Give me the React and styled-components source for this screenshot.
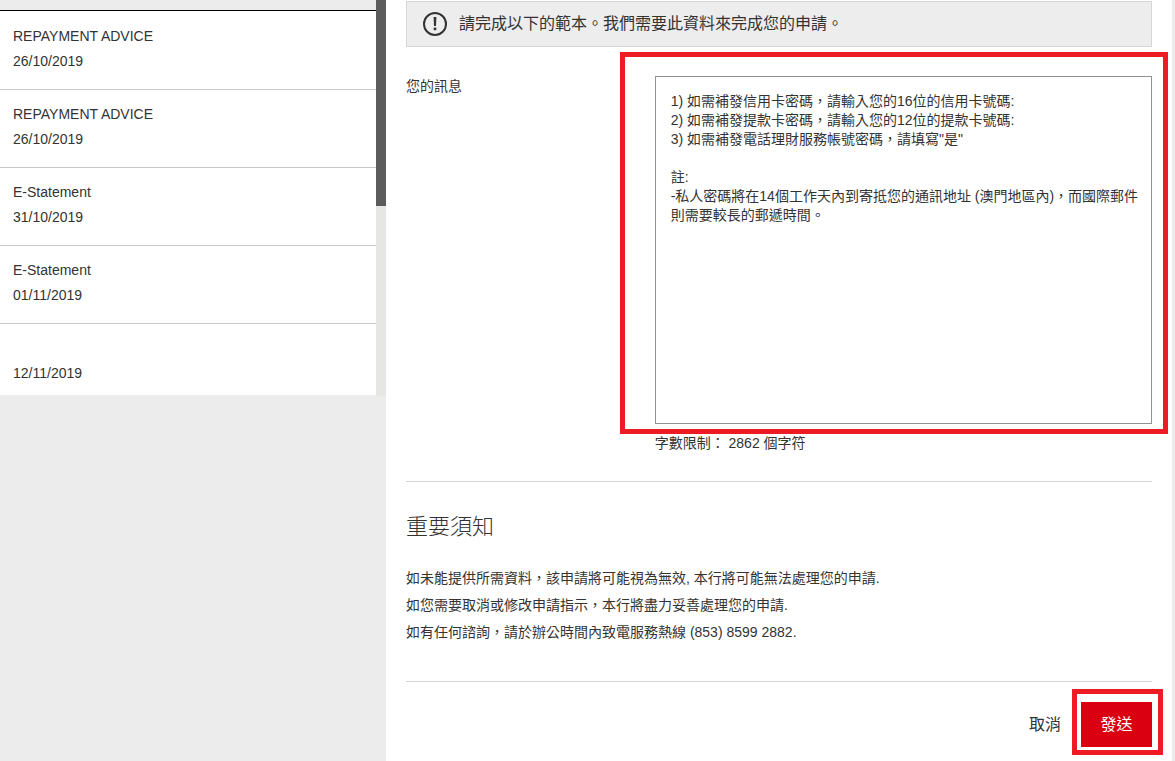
import React, { useState } from "react";
import styled, { createGlobalStyle } from "styled-components";

const messages = [
  { id: 1, title: "REPAYMENT ADVICE", date: "26/10/2019" },
  { id: 2, title: "REPAYMENT ADVICE", date: "26/10/2019" },
  { id: 3, title: "E-Statement", date: "31/10/2019" },
  { id: 4, title: "E-Statement", date: "01/11/2019" },
  { id: 5, title: "", date: "12/11/2019" },
];

const template = `1) 如需補發信用卡密碼，請輸入您的16位的信用卡號碼:
2) 如需補發提款卡密碼，請輸入您的12位的提款卡號碼:
3) 如需補發電話理財服務帳號密碼，請填寫"是"

註:
-私人密碼將在14個工作天內到寄抵您的通訊地址 (澳門地區內)，而國際郵件則需要較長的郵遞時間。`;

const App = () => {
  const [text, setText] = useState(template);

  // the limit shown is what is left after the template
  const remaining = 2862 - (text.length - template.length);

  return (
    <Page lang="zh-Hant">
      <GlobalStyle />
      <Sidebar>
        <MessageList>
          {messages.map((message) => (
            <Message key={message.id}>
              <MessageLine>{message.title}</MessageLine>
              <MessageLine>{message.date}</MessageLine>
            </Message>
          ))}
        </MessageList>
        <ScrollTrack>
          <ScrollThumb />
        </ScrollTrack>
      </Sidebar>

      <Main>
        <Notice>
          <AlertIcon />
          <span>請完成以下的範本。我們需要此資料來完成您的申請。</span>
        </Notice>

        <Field>
          <Label htmlFor="message">您的訊息</Label>
          <div>
            <Framed>
              <TextArea
                id="message"
                spellCheck={false}
                value={text}
                onChange={(e) => setText(e.target.value)}
              />
              <Frame $top={24} $right={16} $bottom={10} $left={35} />
            </Framed>
            <Count>字數限制： {remaining} 個字符</Count>
          </div>
        </Field>

        <Notes>
          <Heading>重要須知</Heading>
          <Note>如未能提供所需資料，該申請將可能視為無效, 本行將可能無法處理您的申請.</Note>
          <Note>如您需要取消或修改申請指示，本行將盡力妥善處理您的申請.</Note>
          <Note>如有任何諮詢，請於辦公時間內致電服務熱線 (853) 8599 2882.</Note>
        </Notes>

        <Actions>
          <CancelButton type="button">取消</CancelButton>
          <Framed>
            <SendButton type="button">發送</SendButton>
            <Frame $top={13} $right={11} $bottom={8} $left={9} />
          </Framed>
        </Actions>
      </Main>
    </Page>
  );
};

const AlertIcon = () => (
  <svg width="24" height="24" viewBox="0 0 24 24" aria-hidden="true">
    <circle cx="12" cy="12" r="11" fill="none" stroke="#333" strokeWidth="2" />
    <path d="M10.6 5h2.8l-.4 9h-2z" fill="#333" />
    <rect x="10.7" y="15.6" width="2.6" height="2.6" fill="#333" />
  </svg>
);

const GlobalStyle = createGlobalStyle`
  * {
    box-sizing: border-box;
  }

  body {
    margin: 0;
    background: #ececec;
    color: #333;
    font-family: "Liberation Sans", "Noto Sans CJK TC", sans-serif;
    font-size: 14px;
  }

  button,
  textarea {
    font-family: inherit;
    color: inherit;
  }
`;

const Page = styled.div`
  display: flex;
  min-height: 100vh;
  padding-right: 3px;
`;

const Sidebar = styled.aside`
  display: flex;
  align-items: flex-start;
  flex: 0 0 386px;
`;

const MessageList = styled.ul`
  flex: 1;
  margin: 10px 0 0;
  padding: 1px 0 0;
  border-top: 1px solid #000;
  background: #fff;
  list-style: none;
`;

const Message = styled.li`
  padding: 12px 13px 15px;
  border-bottom: 1px solid #c8c8c8;

  &:last-child {
    padding-bottom: 9px;
    border-bottom: none;
  }
`;

const MessageLine = styled.div`
  min-height: 25px;
  line-height: 25px;
`;

const ScrollTrack = styled.div`
  width: 10px;
  height: 396px;
  background: #e6e6e4;
`;

const ScrollThumb = styled.div`
  height: 206px;
  background: #5c5c5c;
`;

const Main = styled.main`
  flex: 1;
  min-width: 0;
  padding: 1px 20px 14px;
  background: #fff;
`;

const Notice = styled.div`
  display: flex;
  align-items: center;
  gap: 12px;
  padding: 10px 16px;
  border: 1px solid #d7d8d6;
  background: #ededed;
  font-size: 16px;
  line-height: 24px;
`;

const Field = styled.div`
  display: grid;
  grid-template-columns: 1fr 2fr;
  margin-top: 29px;
  padding-bottom: 28px;
  border-bottom: 1px solid #d7d8d6;
`;

const Label = styled.label`
  line-height: 20px;
`;

const Framed = styled.div`
  position: relative;
`;

// red marker drawn around a control
const Frame = styled.div`
  position: absolute;
  top: -${(props) => props.$top}px;
  right: -${(props) => props.$right}px;
  bottom: -${(props) => props.$bottom}px;
  left: -${(props) => props.$left}px;
  border: 5px solid #ed1c24;
  pointer-events: none;
`;

const TextArea = styled.textarea`
  display: block;
  width: 100%;
  height: 348px;
  padding: 15px 10px 15px 15px;
  border: 1px solid #929292;
  border-radius: 0;
  outline: none;
  background: #fff;
  font-size: 14px;
  line-height: 19px;
  resize: none;
`;

const Count = styled.div`
  margin-top: 9px;
  line-height: 20px;
`;

const Notes = styled.section`
  padding: 29px 0 35px;
  border-bottom: 1px solid #d7d8d6;
`;

const Heading = styled.h2`
  margin: 0 0 22px;
  font-size: 22px;
  font-weight: 300;
  line-height: 32px;
`;

const Note = styled.p`
  margin: 0;
  line-height: 27px;
`;

const Actions = styled.div`
  display: flex;
  justify-content: flex-end;
  gap: 20px;
  padding-top: 20px;
`;

const Button = styled.button`
  height: 45px;
  border: none;
  font-size: 16px;
  line-height: 24px;
  cursor: pointer;
`;

const CancelButton = styled(Button)`
  padding: 0;
  background: none;
`;

const SendButton = styled(Button)`
  display: block;
  min-width: 71px;
  padding: 0 19px;
  background: #db0011;
  color: #fff;
`;

export default App;
